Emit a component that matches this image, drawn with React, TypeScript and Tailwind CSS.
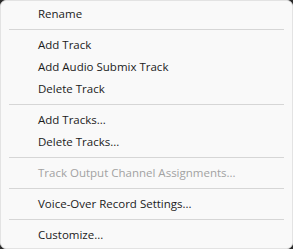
const items: (string | { label: string; disabled?: boolean } | null)[] = [
  'Rename',
  null,
  'Add Track',
  'Add Audio Submix Track',
  'Delete Track',
  null,
  'Add Tracks...',
  'Delete Tracks...',
  null,
  { label: 'Track Output Channel Assignments...', disabled: true },
  null,
  'Voice-Over Record Settings...',
  null,
  'Customize...',
];

export default function App() {
  return (
    <div className="w-[293px] h-[249px] bg-[#2b2b2b]">
      <div
        className="w-full h-full bg-[#f9f9f9] border border-[#e3e3e3] rounded-[6px] py-[2px] text-[11.5px] text-[#1b1b1b]"
        style={{ fontFamily: '"Segoe UI", "Open Sans", "Noto Sans", sans-serif' }}
      >
        {items.map((item, i) => {
          if (item === null) {
            return (
              <div key={i} className="h-[9px] flex items-center px-[8px]">
                <div className="w-full h-px bg-[#d6d6d6]" />
              </div>
            );
          }
          const label = typeof item === 'string' ? item : item.label;
          const disabled = typeof item !== 'string' && item.disabled;
          return (
            <div
              key={i}
              className={`h-[22px] flex items-center pl-[37px] ${disabled ? 'text-[#a2a2a2]' : ''}`}
            >
              {label}
            </div>
          );
        })}
      </div>
    </div>
  );
}
